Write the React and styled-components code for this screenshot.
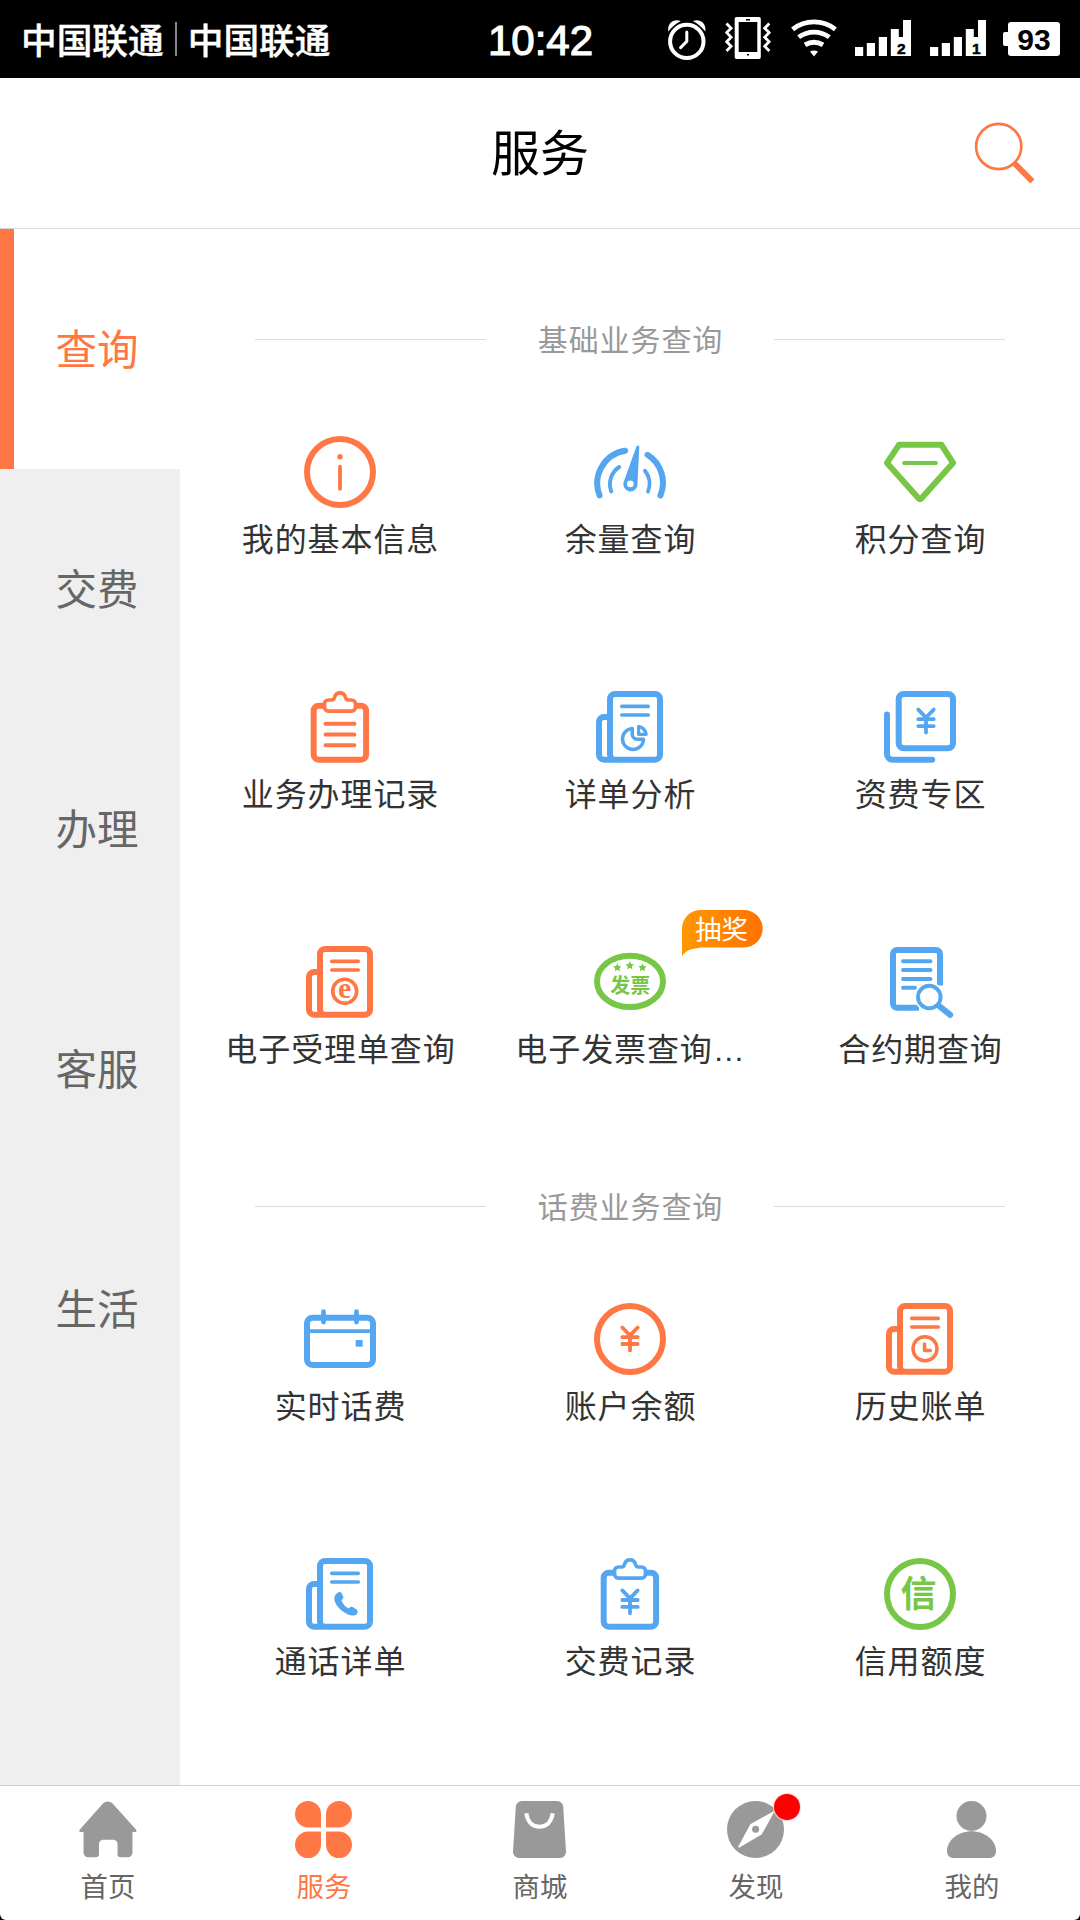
import React from 'react';
import styled, { createGlobalStyle } from 'styled-components';

const ORANGE = '#ff7744';
const BLUE = '#55a6f0';
const GREEN = '#78c646';

const menu = ['查询', '交费', '办理', '客服', '生活'];

const sections = [
    {
        title: '基础业务查询',
        items: [
            { label: '我的基本信息', color: ORANGE, icon: InfoIcon },
            { label: '余量查询', color: BLUE, icon: GaugeIcon },
            { label: '积分查询', color: GREEN, icon: DiamondIcon },
            { label: '业务办理记录', color: ORANGE, icon: RecordIcon },
            { label: '详单分析', color: BLUE, icon: AnalysisIcon },
            { label: '资费专区', color: BLUE, icon: TariffIcon },
            { label: '电子受理单查询', color: ORANGE, icon: EOrderIcon },
            { label: '电子发票查询…', color: GREEN, icon: InvoiceIcon, badge: '抽奖' },
            { label: '合约期查询', color: BLUE, icon: ContractIcon },
        ],
    },
    {
        title: '话费业务查询',
        items: [
            { label: '实时话费', color: BLUE, icon: CalendarIcon },
            { label: '账户余额', color: ORANGE, icon: BalanceIcon },
            { label: '历史账单', color: ORANGE, icon: HistoryIcon },
            { label: '通话详单', color: BLUE, icon: CallIcon },
            { label: '交费记录', color: BLUE, icon: PaymentIcon },
            { label: '信用额度', color: GREEN, icon: CreditIcon },
        ],
    },
];

const tabs = [
    { label: '首页', icon: HomeIcon },
    { label: '服务', icon: CloverIcon },
    { label: '商城', icon: BagIcon },
    { label: '发现', icon: CompassIcon, dot: true },
    { label: '我的', icon: UserIcon },
];

export default function App() {
    const [activeMenu, setActiveMenu] = React.useState('查询');
    const [activeTab, setActiveTab] = React.useState('服务');

    return (
        <>
            <GlobalStyle />
            <Screen>
                <StatusBar />
                <Header>
                    <span />
                    <Title>服务</Title>
                    <SearchButton aria-label="搜索"><SearchIcon /></SearchButton>
                </Header>
                <Body>
                    <Sidebar>
                        {menu.map((name) => (
                            <MenuItem key={name} $active={name === activeMenu} onClick={() => setActiveMenu(name)}>
                                {name}
                            </MenuItem>
                        ))}
                    </Sidebar>
                    <Content>
                        {sections.map((section) => (
                            <section key={section.title}>
                                <SectionTitle>
                                    <Rule />
                                    <SectionName>{section.title}</SectionName>
                                    <Rule />
                                </SectionTitle>
                                <ServiceGrid>
                                    {section.items.map(({ label, color, icon: Icon, badge }) => (
                                        <Service key={label}>
                                            <ServiceIcon viewBox="0 0 72 72" $color={color}><Icon /></ServiceIcon>
                                            <ServiceLabel>{label}</ServiceLabel>
                                            {badge && <PromoBadge text={badge} />}
                                        </Service>
                                    ))}
                                </ServiceGrid>
                            </section>
                        ))}
                    </Content>
                </Body>
                <TabBar>
                    {tabs.map(({ label, icon: Icon, dot }) => (
                        <Tab key={label} $active={label === activeTab} onClick={() => setActiveTab(label)}>
                            <TabIcon>
                                <Icon />
                                {dot && <Dot />}
                            </TabIcon>
                            <TabLabel>{label}</TabLabel>
                        </Tab>
                    ))}
                </TabBar>
            </Screen>
        </>
    );
}

/* ---------- status bar ---------- */

function StatusBar() {
    return (
        <StatusStyle>
            <Carriers>
                <span>中国联通</span>
                <Separator />
                <span>中国联通</span>
            </Carriers>
            <Clock>10:42</Clock>
            <StatusIcons>
                <svg width="38" height="44" viewBox="0 0 38 44">
                    <circle cx="18.8" cy="24.4" r="16.7" fill="none" stroke="#fff" strokeWidth="4" />
                    <path d="M18.8 15v9.400l-6.200 6.200" fill="none" stroke="#fff" strokeWidth="3" strokeLinecap="round" strokeLinejoin="round" />
                    <path d="M.3 14.500C-1 6.500 5.400 1 12.800 4 8 6.600 4 9.800 .3 14.500zM37.300 14.500C38.600 6.500 32.200 1 24.800 4 29.600 6.600 33.600 9.800 37.300 14.500z" fill="#fff" />
                </svg>
                <svg width="46" height="44" viewBox="0 0 46 44">
                    <path fillRule="evenodd" d="M11.500 0h22.500a1.800 1.800 0 0 1 1.800 1.800v38.400a1.800 1.800 0 0 1-1.800 1.800h-22.500a1.800 1.800 0 0 1-1.800-1.800V1.800a1.800 1.800 0 0 1 1.800-1.800zM13.700 5v30h18.600V5z" fill="#fff" />
                    <path d="M21 2.700h4M22 37.700h2" stroke="#000" strokeWidth="1.4" />
                    <path d="M1.500 6.500l4.600 4.700-4.400 4.400 4.400 4.600-4.400 4.600 4.400 4.500-4.600 4.600M44.300 6.500l-4.600 4.700 4.400 4.400-4.400 4.600 4.400 4.600-4.400 4.500 4.600 4.600" fill="none" stroke="#fff" strokeWidth="2.8" />
                </svg>
                <svg width="46" height="40" viewBox="0 0 46 40">
                    <g fill="none" stroke="#fff" strokeWidth="4.8">
                        <path d="M1.600 10.300a34.700 34.700 0 0 1 42.800 0" />
                        <path d="M7.700 18.200a25.500 25.500 0 0 1 30.600 0" />
                        <path d="M14 25.900a17.500 17.500 0 0 1 18 0" />
                    </g>
                    <path d="M19 32.500a9 9 0 0 1 8 0L23 37.600z" fill="#fff" />
                </svg>
                <SignalIcon sim="2" />
                <SignalIcon sim="1" />
                <Battery>93</Battery>
            </StatusIcons>
        </StatusStyle>
    );
}

function SignalIcon({ sim }) {
    return (
        <svg width="56" height="38" viewBox="0 0 56 38">
            <path d="M0 27h8.200v9H0zM11.800 23H20v13h-8.200zM23.800 17H32v19h-8.200zM35.800 9h8v8H48V0h8v36H35.800z" fill="#fff" />
            <SimNumber x="46.3" y="33.5">{sim}</SimNumber>
        </svg>
    );
}

function SearchIcon() {
    return (
        <svg width="62" height="62" viewBox="0 0 62 62" fill="none" stroke={ORANGE}>
            <circle cx="24.7" cy="24.5" r="22.6" strokeWidth="2.7" />
            <path d="M39.800 40.700L58.400 59.400" strokeWidth="5.8" />
        </svg>
    );
}

function PromoBadge({ text }) {
    return (
        <BadgeStyle>
            <svg width="81" height="49" viewBox="0 0 81 49">
                <defs>
                    <linearGradient id="promo">
                        <stop offset="0" stopColor="#ff9800" />
                        <stop offset="1" stopColor="#ff7200" />
                    </linearGradient>
                </defs>
                <path d="M0 46.500V19C0 8 8 0 19 0h43a18.700 18.700 0 0 1 0 37.400H24C12 37.400 3 40 0 46.500z" fill="url(#promo)" />
            </svg>
            <BadgeText>{text}</BadgeText>
        </BadgeStyle>
    );
}

/* ---------- service icons, 72 x 72 ---------- */

// front page with a folded sheet behind it
function Page({ children }) {
    return (
        <>
            <rect x="16" y="3" width="50" height="65.7" rx="5" />
            <path d="M16 26h-6a5 5 0 0 0-5 5v32.700a5 5 0 0 0 5 5h8" />
            <path d="M27.800 15.300h26.400M27.800 24h26.400" strokeWidth="3.7" />
            {children}
        </>
    );
}

function Clipboard({ children }) {
    return (
        <>
            <rect x="9.7" y="14.7" width="52.4" height="54" rx="5" />
            <path
                d="M24.500 9h3.200c1.600 0 2.400-1 2.800-2.600C31.300 3.500 33.300 1.900 36 1.900s4.700 1.600 5.500 4.500c.4 1.600 1.200 2.600 2.800 2.600h3.200a4 4 0 0 1 4 4v3.200a4 4 0 0 1-4 4h-23a4 4 0 0 1-4-4V13a4 4 0 0 1 4-4z"
                fill="#fff"
                strokeWidth="3.7"
            />
            {children}
        </>
    );
}

function Yen({ x = 0, y = 0 }) {
    return (
        <path
            transform={`translate(${x} ${y})`}
            d="M-7.700 1.900L0 9.800l7.700-7.900M-7.700 11.500H7.700M-7.700 18.400H7.700M0 9.800v15"
            strokeWidth="3.8"
        />
    );
}

function InfoIcon() {
    return (
        <>
            <circle cx="36" cy="36" r="33" />
            <path d="M36 30.600v22.200" strokeWidth="3.8" />
            <Solid as="circle" cx="36" cy="20.7" r="2.7" />
        </>
    );
}

function GaugeIcon() {
    return (
        <>
            <path d="M5.600 59.500A33 33 0 0 1 31.200 14.700M53.500 18.800A33 33 0 0 1 66.400 59.500" />
            <path d="M17.300 55.500A20.500 20.500 0 0 1 25.200 31M51 34.800A20.500 20.500 0 0 1 54 55.500" strokeWidth="3.9" />
            <Solid fillRule="evenodd" d="M42.200 11L29.600 46.200a7.100 7.100 0 1 0 13.800 3.200L45.300 11c.1-2-2.500-2-3.100 0zM36.300 44.600a3.300 3.300 0 1 1 0 6.600 3.300 3.300 0 0 1 0-6.600z" />
        </>
    );
}

function DiamondIcon() {
    return (
        <>
            <path d="M15 8.800h42.500L69 26.900 37.500 62.300q-1.500 1.400-3 0L3 26.900z" />
            <path d="M20 27h32" strokeWidth="3.9" />
        </>
    );
}

function RecordIcon() {
    return (
        <Clipboard>
            <path d="M21.500 32.700h29M21.500 43.500h29M21.500 54.300h29" strokeWidth="3.9" />
        </Clipboard>
    );
}

function AnalysisIcon() {
    return (
        <Page>
            <path d="M38.300 37.400v5.800a5 5 0 0 0 5 5h6.200a10.500 10.500 0 1 1-11.200-10.800z" strokeWidth="3.5" />
            <path d="M44.600 35.400c4 .9 6.800 3.900 7.600 7.900h-7.600z" strokeWidth="3.2" />
        </Page>
    );
}

function TariffIcon() {
    return (
        <>
            <rect x="14.7" y="3" width="54.3" height="54.3" rx="5" />
            <path d="M3 23.500V63a5.700 5.700 0 0 0 5.700 5.700h39.500" />
            <Yen x={42} y={16.7} />
        </>
    );
}

function EOrderIcon() {
    return (
        <Page>
            <circle cx="40.7" cy="45.3" r="12" strokeWidth="3.6" />
            <IconText x="40.7" y="51.8" $serif $size={30}>e</IconText>
        </Page>
    );
}

function InvoiceIcon() {
    const star = 'M0-4.200L1.300-1.500 4.200-1.200 2.100.8 2.600 3.700 0 2.300-2.600 3.700-2.100.8-4.200-1.200-1.300-1.500z';
    return (
        <>
            <ellipse cx="36" cy="35.4" rx="33" ry="25.7" />
            <Solid d={star} transform="translate(23.3 21.5)" />
            <Solid d={star} transform="translate(35.8 19.5)" />
            <Solid d={star} transform="translate(48.5 21.5)" />
            <IconText x="36.2" y="47.3" $size={20}>发票</IconText>
        </>
    );
}

function ContractIcon() {
    return (
        <>
            <path d="M56 39.500V8a4 4 0 0 0-4-4H13a4 4 0 0 0-4 4v49.700a4 4 0 0 0 4 4h22" strokeLinecap="butt" />
            <path d="M19 15.300h27.500M19 24h27.500M19 33h27.500M19 41.800h12" strokeWidth="3.9" />
            <circle cx="45.3" cy="51" r="14.8" fill="#fff" stroke="none" />
            <circle cx="45.3" cy="51" r="11.3" strokeWidth="3.9" />
            <path d="M55 59.800l11.200 9" />
        </>
    );
}

function CalendarIcon() {
    return (
        <>
            <rect x="3" y="14.7" width="66" height="47.3" rx="5.5" />
            <path d="M4 28.200h64" strokeWidth="3.7" />
            <path d="M19.500 8.700v10.300M52.500 8.700v10.300" strokeWidth="4.8" />
            <Solid d="M51.700 37h7v6.700h-7z" />
        </>
    );
}

function BalanceIcon() {
    return (
        <>
            <circle cx="36" cy="36" r="33" />
            <Yen x={36} y={22.6} />
        </>
    );
}

function HistoryIcon() {
    return (
        <Page>
            <circle cx="41" cy="45.7" r="12" strokeWidth="3.5" />
            <path d="M40.500 41v6.600h5.800" strokeWidth="3.5" />
        </Page>
    );
}

function CallIcon() {
    return (
        <Page>
            <Solid d="M34.200 34.500c1.800-1 3.200 0 4 1.800l1 2.300c.6 1.600-.6 2.800-1.800 4 1.500 3.600 4 6.200 7.200 8 1.400-1.600 2.800-2.300 4.400-1.400l3.400 2c1.800 1.400 1.600 3.600.3 5-2.800 2.700-8.500 1.400-13.600-2.600C31 47.600 26.800 38.500 34.200 34.500z" />
        </Page>
    );
}

function PaymentIcon() {
    return (
        <Clipboard>
            <Yen x={36} y={30.5} />
        </Clipboard>
    );
}

function CreditIcon() {
    return (
        <>
            <circle cx="36" cy="36" r="33" />
            <IconText x="34.5" y="49.4" $size={36}>信</IconText>
        </>
    );
}

/* ---------- tab icons ---------- */

function HomeIcon() {
    return (
        <svg width="58" height="57" viewBox="0 0 58 57">
            <path d="M24 2.600a6.500 6.500 0 0 1 9.600 0L57 28.400c1 1.200.6 2.600-1 2.600h-2.500v20.500a4.800 4.800 0 0 1-4.800 4.800h-7a3.200 3.200 0 0 1-3.200-3.200V43a4.200 4.200 0 0 0-4.200-4.200h-10A4.200 4.200 0 0 0 20 43v10.100a3.200 3.200 0 0 1-3.200 3.200H9.300a4.800 4.800 0 0 1-4.800-4.800V31H1.800C.2 31-.2 29.600.8 28.400z" />
        </svg>
    );
}

function CloverIcon() {
    return (
        <svg width="57" height="57" viewBox="0 0 57 57">
            <path d="M26 26.400H13A13 13.200 0 1 1 26 13.200zM31 26.400h13A13 13.200 0 1 0 31 13.200zM26 30.600H13a13 13.200 0 1 0 13 13.200zM31 30.600h13a13 13.200 0 1 1-13 13.200z" />
        </svg>
    );
}

function BagIcon() {
    return (
        <svg width="53" height="57" viewBox="0 0 53 57">
            <path d="M8.800 0h35.400a6 6 0 0 1 6 5.700L53 50.500a6 6 0 0 1-6 6.500H6a6 6 0 0 1-6-6.500L2.800 5.700A6 6 0 0 1 8.800 0z" />
            <path d="M13.300 12.300C14.500 21 19.500 25.700 26.500 25.700S38.500 21 39.700 12.300" fill="none" stroke="#fff" strokeWidth="4" />
        </svg>
    );
}

function CompassIcon() {
    return (
        <svg width="57" height="57" viewBox="0 0 57 57">
            <circle cx="28.5" cy="28.5" r="28.5" />
            <path d="M48 9.500L23.300 23.200 11.200 45.700q0 1.200 1.200.8L34.600 33.600z" fill="#fff" />
            <circle cx="28.6" cy="28.2" r="3.5" />
        </svg>
    );
}

function UserIcon() {
    return (
        <svg width="49" height="57" viewBox="0 0 49 57">
            <circle cx="24.5" cy="15" r="15" />
            <path d="M24.500 30.300C38 30.300 49 39.500 49 50c0 4.500-2.700 7-7 7H7c-4.300 0-7-2.500-7-7 0-10.500 11-19.700 24.500-19.700z" />
        </svg>
    );
}

/* ---------- styles ---------- */

const GlobalStyle = createGlobalStyle`
    * {
        box-sizing: border-box;
    }

    body {
        margin: 0;
        background: #000000;
        font-family: 'Noto Sans CJK SC', 'Liberation Sans', sans-serif;
    }

    button {
        margin: 0;
        padding: 0;
        border: 0;
        background: none;
        font: inherit;
    }
`;

const Screen = styled.div`
    display: flex;
    flex-direction: column;
    width: 1080px;
    height: 1920px;
    overflow: hidden;
    background: #FFFFFF;
    border-radius: 0 0 6px 6px;
`;

const StatusStyle = styled.div`
    display: grid;
    grid-template-columns: 1fr auto 1fr;
    align-items: center;
    height: 78px;
    padding: 0 20px 0 21px;
    background: #000000;
    color: #FFFFFF;
`;

const Carriers = styled.div`
    display: flex;
    align-items: center;
    padding-bottom: 1px;
    font-size: 35.7px;
    font-weight: 500;
    line-height: 50px;
    -webkit-text-stroke: 0.4px #FFFFFF;
`;

const Separator = styled.i`
    width: 2px;
    height: 34px;
    margin: 0 11px;
    background: #888888;
`;

const Clock = styled.div`
    padding-top: 3px;
    font-family: 'Liberation Sans', sans-serif;
    font-size: 42px;
    line-height: 50px;
    -webkit-text-stroke: 1.2px #FFFFFF;
`;

const StatusIcons = styled.div`
    display: flex;
    justify-content: flex-end;
    align-items: center;
    gap: 18.5px;

    svg:nth-child(2) {
        margin-right: 1.5px;
    }
`;

const SimNumber = styled.text`
    font-family: 'Liberation Sans', sans-serif;
    font-size: 15.5px;
    font-weight: 700;
    text-anchor: middle;
    stroke: #000000;
    stroke-width: 0.5px;
`;

const Battery = styled.div`
    position: relative;
    width: 52px;
    height: 34px;
    margin-left: 4px;
    border-radius: 3px;
    background: #FFFFFF;

    font-family: 'Liberation Sans', sans-serif;
    font-size: 30px;
    font-weight: 700;
    line-height: 36px;
    text-align: center;
    color: #000000;

    &::before {
        content: '';
        position: absolute;
        left: -5px;
        top: 10px;
        width: 5px;
        height: 14px;
        border-radius: 2px 0 0 2px;
        background: #FFFFFF;
    }
`;

const Header = styled.header`
    display: grid;
    grid-template-columns: 1fr auto 1fr;
    align-items: center;
    height: 151px;
    padding: 0 44px;
    border-bottom: 1px solid #D9D9D9;
`;

const Title = styled.h1`
    margin: 0;
    padding-bottom: 6px;
    font-size: 49px;
    font-weight: 400;
    line-height: 70px;
    color: #000000;
`;

const SearchButton = styled.button`
    display: flex;
    justify-self: end;
`;

const Body = styled.div`
    display: flex;
    flex: 1;
    min-height: 0;
`;

const Sidebar = styled.nav`
    display: flex;
    flex-direction: column;
    width: 180px;
    background: #EFEFEF;
`;

const MenuItem = styled.button`
    height: 240px;
    padding-bottom: 5px;
    border-left: 14px solid ${({ $active }) => ($active ? ORANGE : 'transparent')};
    background: ${({ $active }) => ($active ? '#FFFFFF' : 'transparent')};
    color: ${({ $active }) => ($active ? ORANGE : '#666666')};
    font-size: 41.5px;
`;

const Content = styled.main`
    flex: 1;
    padding: 59px 15px 0;
`;

const SectionTitle = styled.div`
    display: flex;
    justify-content: space-between;
    align-items: center;
    height: 102px;
    padding: 0 60px;
`;

const Rule = styled.i`
    width: 231px;
    height: 1px;
    background: #DCDCDC;
`;

const SectionName = styled.h2`
    margin: 0;
    padding: 0 0 2px 1px;
    font-size: 30px;
    font-weight: 400;
    letter-spacing: 0.9px;
    line-height: 44px;
    color: #999999;
`;

const ServiceGrid = styled.div`
    display: grid;
    grid-template-columns: repeat(3, 1fr);
    grid-auto-rows: 255px;
`;

const Service = styled.div`
    position: relative;
    display: flex;
    flex-direction: column;
    align-items: center;
    padding-top: 46px;
`;

const ServiceIcon = styled.svg`
    width: 72px;
    height: 72px;
    color: ${({ $color }) => $color};
    fill: none;
    stroke: currentColor;
    stroke-width: 6px;
    stroke-linecap: round;
    stroke-linejoin: round;
`;

const Solid = styled.path`
    fill: currentColor;
    stroke: none;
`;

const IconText = styled.text`
    fill: currentColor;
    stroke: none;
    font-family: ${({ $serif }) => ($serif ? "'Liberation Serif', serif" : "'Noto Sans CJK SC', sans-serif")};
    font-size: ${({ $size }) => $size}px;
    font-weight: 700;
    text-anchor: middle;
`;

/* Liberation Sans comes first for its low ellipsis */
const ServiceLabel = styled.div`
    margin-top: 10px;
    padding-left: 1px;
    font-family: 'Liberation Sans', 'Noto Sans CJK SC', sans-serif;
    font-size: 32px;
    letter-spacing: 0.9px;
    line-height: 44px;
    white-space: nowrap;
    color: #333333;
`;

const BadgeStyle = styled.div`
    position: absolute;
    left: 197px;
    top: 10px;
    display: grid;

    > * {
        grid-area: 1 / 1;
    }
`;

const BadgeText = styled.span`
    height: 38px;
    padding-right: 2px;
    font-size: 26.5px;
    line-height: 36px;
    text-align: center;
    color: #FFFFFF;
`;

const TabBar = styled.nav`
    display: grid;
    grid-template-columns: repeat(5, 1fr);
    height: 135px;
    border-top: 1px solid #D0D0D0;
`;

const Tab = styled.button`
    display: flex;
    flex-direction: column;
    align-items: center;
    padding-top: 15px;
    color: ${({ $active }) => ($active ? ORANGE : '#666666')};

    svg {
        display: block;
        fill: ${({ $active }) => ($active ? ORANGE : '#999999')};
    }
`;

const TabIcon = styled.div`
    position: relative;
    margin-right: 1px;
`;

const Dot = styled.i`
    position: absolute;
    left: 47px;
    top: -7.5px;
    width: 26px;
    height: 26px;
    border-radius: 50%;
    background: #FF0000;
    box-shadow: 0 0 0 1px #FFD8D8;
`;

const TabLabel = styled.div`
    margin-top: 10px;
    font-size: 27.4px;
    line-height: 34px;
`;
